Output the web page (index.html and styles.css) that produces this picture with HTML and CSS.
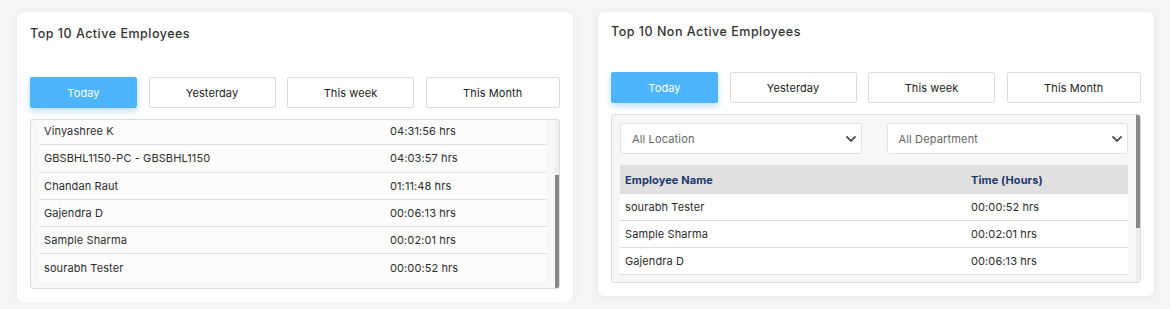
FILE: index.html
```html
<!DOCTYPE html>
<html lang="en">
<head>
<meta charset="utf-8">
<title>Employees</title>
<link rel="stylesheet" href="styles.css">
</head>
<body>
<div class="dashboard">
  <section class="card card--active">
    <h2 class="card-title">Top 10 Active Employees</h2>
    <div class="tabs">
      <button class="tab tab--today is-active">Today</button>
      <button class="tab tab--mid">Yesterday</button>
      <button class="tab tab--mid">This week</button>
      <button class="tab tab--last">This Month</button>
    </div>
    <div class="panel panel--active">
      <div class="panel-body">
        <div class="list list--shifted">
          <div class="row row--soft"><span>Vinyashree K</span><span>04:31:56 hrs</span></div>
          <div class="row row--soft"><span>GBSBHL1150-PC - GBSBHL1150</span><span>04:03:57 hrs</span></div>
          <div class="row row--soft"><span>Chandan Raut</span><span>01:11:48 hrs</span></div>
          <div class="row row--soft"><span>Gajendra D</span><span>00:06:13 hrs</span></div>
          <div class="row row--soft"><span>Sample Sharma</span><span>00:02:01 hrs</span></div>
          <div class="row row--soft row--last"><span>sourabh Tester</span><span>00:00:52 hrs</span></div>
        </div>
      </div>
      <div class="scrollbar"><div class="thumb thumb--low"></div></div>
    </div>
  </section>

  <section class="card card--inactive">
    <h2 class="card-title">Top 10 Non Active Employees</h2>
    <div class="tabs">
      <button class="tab tab--today is-active">Today</button>
      <button class="tab tab--mid">Yesterday</button>
      <button class="tab tab--mid">This week</button>
      <button class="tab tab--last">This Month</button>
    </div>
    <div class="panel panel--inactive">
      <div class="panel-body panel-body--padded">
        <div class="filters">
          <div class="select"><span>All Location</span>
            <svg class="chevron" width="10" height="6" viewBox="0 0 10 6"><polyline points="1,1 5,5 9,1" fill="none" stroke="#555" stroke-width="1.8" stroke-linecap="round" stroke-linejoin="round"/></svg>
          </div>
          <div class="select"><span>All Department</span>
            <svg class="chevron" width="10" height="6" viewBox="0 0 10 6"><polyline points="1,1 5,5 9,1" fill="none" stroke="#555" stroke-width="1.8" stroke-linecap="round" stroke-linejoin="round"/></svg>
          </div>
        </div>
        <div class="table">
          <div class="row row--head"><span>Employee Name</span><span>Time (Hours)</span></div>
          <div class="row row--white"><span>sourabh Tester</span><span>00:00:52 hrs</span></div>
          <div class="row row--white"><span>Sample Sharma</span><span>00:02:01 hrs</span></div>
          <div class="row row--white"><span>Gajendra D</span><span>00:06:13 hrs</span></div>
        </div>
      </div>
      <div class="scrollbar"><div class="thumb thumb--top"></div></div>
    </div>
  </section>
</div>
</body>
</html>
```

FILE: styles.css
```css
* { box-sizing: border-box; }

html, body {
  margin: 0;
  padding: 0;
}

body {
  background: #f4f5f7;
  font-family: "Inter", "Liberation Sans", sans-serif;
  color: #2e2e2e;
  font-size: 11px;
}

.dashboard {
  display: flex;
  align-items: flex-start;
  gap: 25px;
  padding: 12px 16px 0 17px;
}

.card {
  width: 556px;
  background: #ffffff;
  border-radius: 6px;
  box-shadow: 0 1px 7px rgba(0, 0, 0, 0.06);
  padding: 11px 13px 13px 13px;
}

.card--active {
  padding-top: 13px;
}

.card-title {
  margin: 0 0 31px 0;
  font-size: 12.5px;
  line-height: 18px;
  font-weight: 500;
  letter-spacing: 0.5px;
  color: #333333;
}

.card--active .card-title {
  margin-bottom: 34px;
}

.tabs {
  display: flex;
  gap: 11.5px;
  margin-bottom: 11px;
}

.tab {
  height: 31px;
  font-family: inherit;
  font-size: 11px;
  color: #222;
  background: #ffffff;
  border: 1px solid #dcdcdc;
  border-radius: 2px;
  padding: 0;
  letter-spacing: 0.1px;
}

.tab--today { width: 107px; }
.tab--mid { width: 127px; }
.tab--last { flex: 1; }

.tab.is-active {
  background: #4db5fd;
  border-color: #4db5fd;
  color: #ffffff;
  box-shadow: 0 3px 6px rgba(60, 160, 240, 0.35);
}

.panel {
  display: flex;
  gap: 8px;
  padding-left: 8px;
  border: 1px solid #dcdcdc;
  border-radius: 3px;
  background: #f7f7f7;
  overflow: hidden;
}

.panel--active { height: 170px; }
.panel--inactive { height: 169px; }

.panel-body {
  flex: 1;
  min-width: 0;
  overflow: hidden;
}

.panel-body--padded {
  padding-top: 8px;
}

.list--shifted {
  margin-top: -2px;
}

.row {
  display: grid;
  grid-template-columns: 346px 1fr;
  align-items: center;
  padding: 0 5px;
  letter-spacing: 0.1px;
}

.row--soft {
  height: 27.3px;
  background: #fcfcfc;
  border-bottom: 1px solid #e1e1e8;
}

.row--last {
  border-bottom: none;
}

.row--head {
  height: 29px;
  background: #e0e0e0;
  color: #1b3a6e;
  font-weight: 700;
}

.row--white {
  height: 27px;
  background: #ffffff;
  border-bottom: 1px solid #dedede;
}

.filters {
  display: flex;
  gap: 25px;
  margin-bottom: 11px;
}

.select {
  flex: 1;
  height: 31px;
  display: flex;
  align-items: center;
  justify-content: space-between;
  padding: 0 5px 0 11px;
  background: #ffffff;
  border: 1px solid #e2e2e2;
  border-radius: 3px;
  color: #666;
  letter-spacing: 0.15px;
}

.chevron {
  display: block;
}

.scrollbar {
  width: 4px;
  flex: none;
  background: #efefef;
}

.thumb {
  width: 4px;
  height: 113px;
  background: #888888;
}

.thumb--low { margin-top: 55px; }
.thumb--top { margin-top: 0; }
```
